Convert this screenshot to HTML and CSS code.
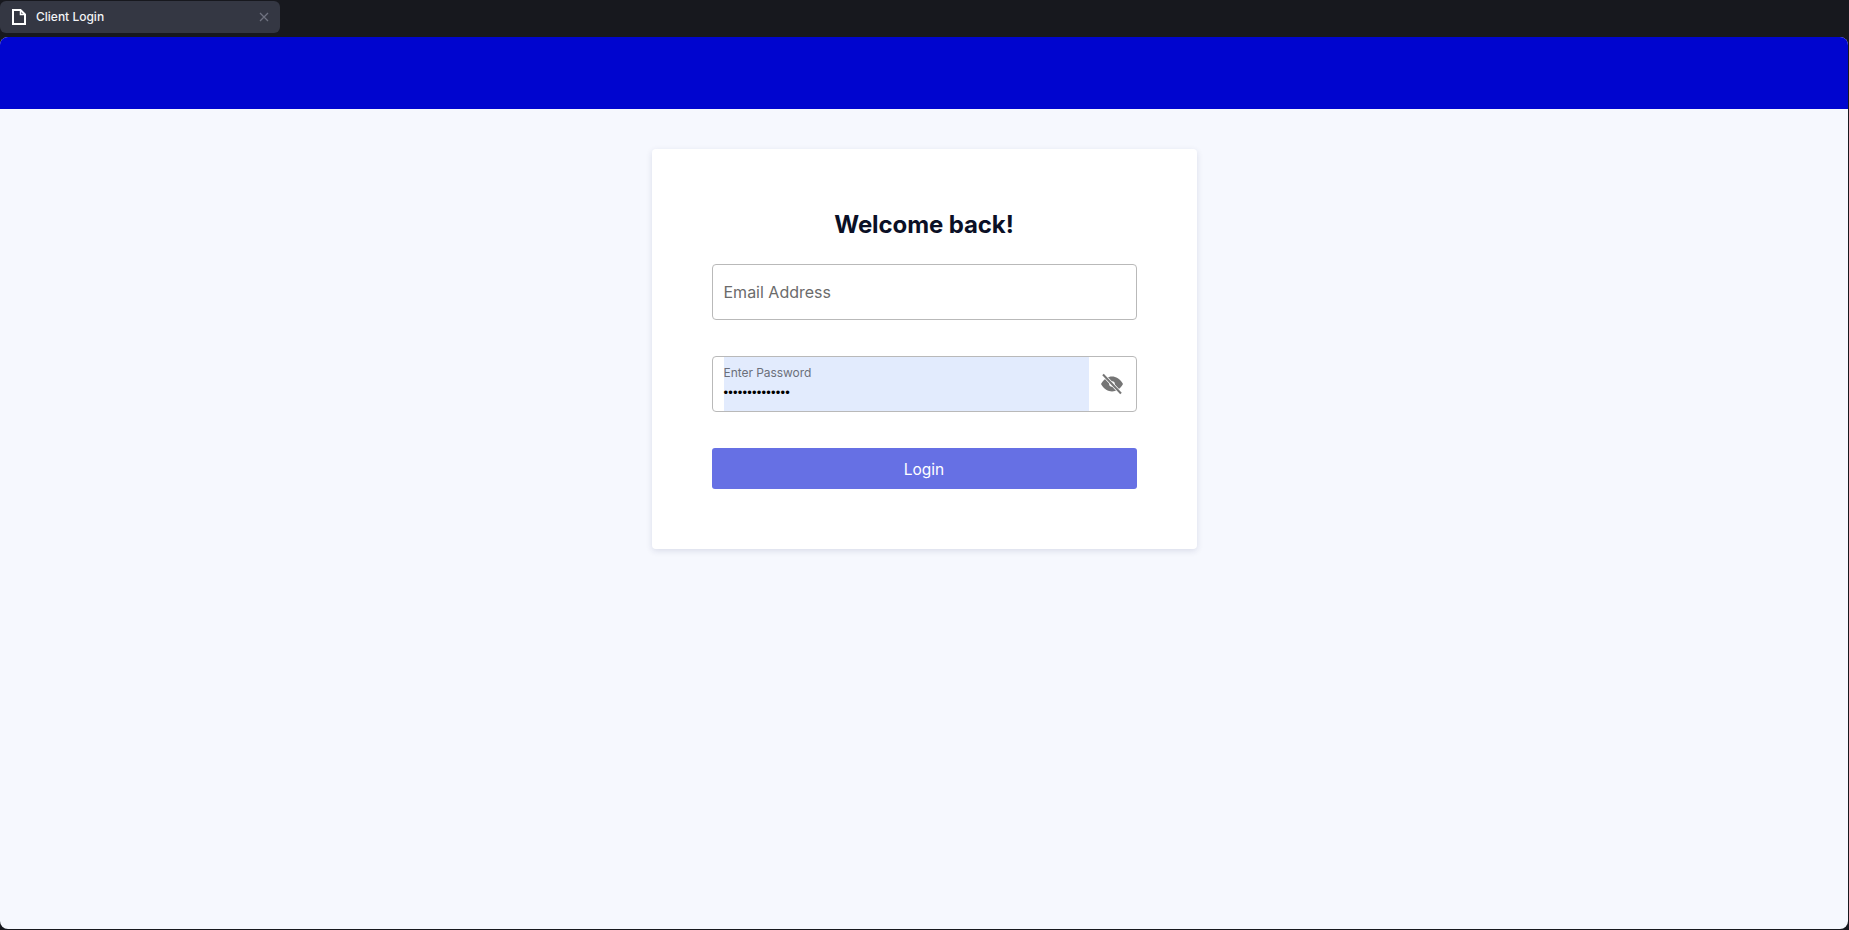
FILE: index.html
```html
<!DOCTYPE html>
<html lang="en">
<head>
  <meta charset="UTF-8" />
  <meta name="viewport" content="width=device-width, initial-scale=1.0"/>
  <title>Client Login</title>
  <link rel="stylesheet" href="styles.css">
</head>
<body>
  <div class="tabbar">
    <div class="tab">
      <svg class="tab-icon" viewBox="0 0 14 16" width="14" height="16">
        <path d="M1 1h7.500L13 5.500V15H1z" fill="none" stroke="#fff" stroke-width="2" stroke-linejoin="miter"/>
        <path d="M8.500 1v4.500H13" fill="none" stroke="#fff" stroke-width="1.500"/>
      </svg>
      <span class="tab-title">Client Login</span>
      <svg class="tab-close" viewBox="0 0 10 10" width="10" height="10">
        <path d="M1 1l8 8M9 1l-8 8" stroke="#6f7280" stroke-width="1.300" fill="none"/>
      </svg>
    </div>
  </div>

  <div class="page">
    <div class="topbar"></div>
    <div class="main">
      <div class="login-card">
        <h1>Welcome back!</h1>

        <div class="field email-field">Email Address</div>

        <div class="field password-field">
          <div class="password-box">
            <label>Enter Password</label>
            <div class="dots">••••••••••••••</div>
          </div>
          <button class="eye-btn" type="button">
            <svg viewBox="0 0 24 24" width="24" height="24">
              <path fill="#757575" d="M1 12C4.200 6.500 8 4.600 12 4.600s7.800 1.900 11 7.400c-3.200 5.500-7 7.400-11 7.400S4.200 17.500 1 12z"/>
              <circle cx="12" cy="12" r="2.800" fill="#fff"/>
              <circle cx="12" cy="12" r="1.400" fill="#9a9a9a"/>
              <path d="M3 2.500l18 19" stroke="#fff" stroke-width="3.400" fill="none"/>
              <path d="M3 2.500l18 19" stroke="#757575" stroke-width="2" fill="none"/>
            </svg>
          </button>
        </div>

        <button class="login-btn" type="button">Login</button>
      </div>
    </div>
  </div>
</body>
</html>
```

FILE: styles.css
```css
* {
  box-sizing: border-box;
}

html, body {
  height: 100%;
}

body {
  margin: 0;
  background: #17181e;
  font-family: Inter, sans-serif;
  display: flex;
  flex-direction: column;
  padding: 0 1px 1px 0;
}

.tabbar {
  height: 37px;
  flex-shrink: 0;
  padding-top: 1px;
}

.tab {
  width: 280px;
  height: 32px;
  background: #343743;
  border-radius: 6px;
  display: flex;
  align-items: center;
  padding: 0 11px 0 12px;
}

.tab-icon {
  flex-shrink: 0;
}

.tab-title {
  margin-left: 10px;
  flex: 1;
  font-size: 12px;
  font-weight: 500;
  line-height: 14px;
  color: #f2f3f5;
}

.page {
  flex: 1;
  display: flex;
  flex-direction: column;
  background: #f6f8fe;
  border-radius: 8px;
  overflow: hidden;
}

.topbar {
  height: 72px;
  background: #0005cf;
}

.main {
  display: flex;
  justify-content: center;
  padding-top: 40px;
}

.login-card {
  width: 545px;
  height: 400px;
  background: #fff;
  border-radius: 4px;
  box-shadow: 0 2px 6px rgba(30, 40, 90, 0.13);
  padding: 61px 60px 0;
}

h1 {
  margin: 0 0 24px;
  height: 30px;
  line-height: 30px;
  text-align: center;
  font-size: 24px;
  font-weight: 700;
  letter-spacing: -0.1px;
  color: #0b1026;
}

.field {
  height: 56px;
  border: 1px solid #b9b9b9;
  border-radius: 4px;
  background: #fff;
}

.email-field {
  display: flex;
  align-items: center;
  padding-left: 11px;
  padding-bottom: 1px;
  margin-bottom: 36px;
  font-size: 16px;
  color: #6b6b6b;
}

.password-field {
  display: flex;
  padding-left: 11px;
  margin-bottom: 36px;
}

.password-box {
  width: 365px;
  background: #e2ebfd;
  padding-top: 8px;
}

.password-box label {
  display: block;
  font-size: 12px;
  line-height: 16px;
  letter-spacing: -0.05px;
  color: #6b6f7a;
}

.dots {
  font-family: "Liberation Sans", sans-serif;
  font-size: 13px;
  line-height: 16px;
  letter-spacing: 0.2px;
  color: #000;
  margin-top: 4px;
}

.eye-btn {
  flex: 1;
  border: none;
  background: none;
  padding: 0;
  display: flex;
  align-items: center;
  justify-content: center;
}

.login-btn {
  display: block;
  width: 100%;
  height: 41px;
  border: none;
  border-radius: 3px;
  padding: 1px 0 0;
  background: #6670e4;
  color: #fff;
  font-family: inherit;
  font-size: 15.500px;
}
```
